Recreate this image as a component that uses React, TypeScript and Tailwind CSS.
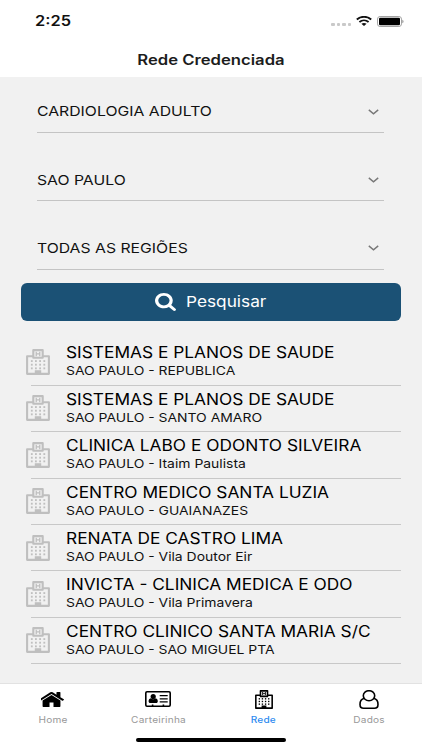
import type { ReactNode } from 'react';

interface Provider {
  name: string;
  place: string;
}

const filters = ['CARDIOLOGIA ADULTO', 'SAO PAULO', 'TODAS AS REGIÕES'];

const providers: Provider[] = [
  { name: 'SISTEMAS E PLANOS DE SAUDE', place: 'SAO PAULO - REPUBLICA' },
  { name: 'SISTEMAS E PLANOS DE SAUDE', place: 'SAO PAULO - SANTO AMARO' },
  { name: 'CLINICA LABO E ODONTO SILVEIRA', place: 'SAO PAULO - Itaim Paulista' },
  { name: 'CENTRO MEDICO SANTA LUZIA', place: 'SAO PAULO - GUAIANAZES' },
  { name: 'RENATA DE CASTRO LIMA', place: 'SAO PAULO - Vila Doutor Eir' },
  { name: 'INVICTA - CLINICA MEDICA E ODO', place: 'SAO PAULO - Vila Primavera' },
  { name: 'CENTRO CLINICO SANTA MARIA S/C', place: 'SAO PAULO - SAO MIGUEL PTA' },
];

function HospitalIcon({ className }: { className: string }) {
  return (
    <svg viewBox="0 0 24 25" preserveAspectRatio="none" className={className} fill="currentColor">
      <path
        d="M7 7H1.1v16.9h21.8V7H17M7.3 1.1h9.4v7.3H7.3z"
        fill="none"
        stroke="currentColor"
        strokeWidth="2.1"
        strokeLinejoin="round"
      />
      <path d="M9.6 2.7h1.3v1.5h2.2V2.7h1.3v4.2h-1.3V5.4h-2.2v1.5H9.6z" />
      {[10.7, 14.2, 17.7].map((y) =>
        [4.9, 9, 13.2, 17.4].map((x) => (
          <rect key={`${x}-${y}`} x={x} y={y} width="1.8" height="1.8" />
        ))
      )}
      <path d="M8.8 20.4h6.4V24H8.8z" />
    </svg>
  );
}

function HomeIcon() {
  return (
    <svg viewBox="154 253 1484 1283" preserveAspectRatio="none" className="h-[15px] w-[23px]" fill="currentColor">
      <path d="M1408 992v480q0 26-19 45t-45 19h-384v-384h-256v384h-384q-26 0-45-19t-19-45v-480q0-1 .5-3t.5-3l575-474 575 474q1 2 1 6zm223-69l-62 74q-8 9-21 11h-3q-13 0-21-7l-692-577-692 577q-12 8-24 7-13-2-21-11l-62-74q-8-10-7-23.5t11-21.5l719-599q32-26 76-26t76 26l244 204v-195q0-14 9-23t23-9h192q14 0 23 9t9 23v408l219 182q10 8 11 21.5t-7 23.5z" />
    </svg>
  );
}

function CardIcon() {
  return (
    <svg viewBox="0 0 26 16" className="h-4 w-[26px]" fill="currentColor">
      <rect x=".8" y=".8" width="24.4" height="14.4" rx="1.2" fill="none" stroke="currentColor" strokeWidth="1.6" />
      <circle cx="8.2" cy="5.6" r="2.6" />
      <path d="M5.7 7.2q2.5 2 5 0c1.4.3 2.1 1.5 2.1 3 0 1.1-.7 1.8-1.6 1.8H5.2c-.9 0-1.6-.7-1.6-1.8 0-1.5.7-2.7 2.1-3z" />
      <path d="M14.7 4h8v1.2h-8zM14.7 7.2h8v1.2h-8zM14.7 10.3h8v1.2h-8zM6.8 13.6h1.6V15H6.8zM17.6 13.6h1.6V15h-1.6z" />
    </svg>
  );
}

function UserIcon() {
  return (
    <svg viewBox="0 0 20 19" className="h-[19px] w-5" fill="none" stroke="currentColor" strokeWidth="1.6">
      <ellipse cx="10" cy="5.7" rx="5.7" ry="5" />
      <path d="M5.3 8.3C2.4 9 1 11.6 1 14.4c0 2.3 1.5 3.8 3.6 3.8h10.8c2.1 0 3.6-1.5 3.6-3.8 0-2.8-1.4-5.4-4.3-6.1" />
    </svg>
  );
}

function SearchIcon() {
  return (
    <svg viewBox="64 128 1664 1664" preserveAspectRatio="none" className="h-[18px] w-[21px]" fill="currentColor">
      <path d="M1216 832q0-185-131.5-316.5t-316.5-131.5-316.5 131.5-131.5 316.5 131.5 316.5 316.5 131.5 316.5-131.5 131.5-316.5zm512 832q0 52-38 90t-90 38q-54 0-90-38l-343-342q-179 124-399 124-143 0-273.5-55.5t-225-150-150-225-55.5-273.5 55.5-273.5 150-225 225-150 273.5-55.5 273.5 55.5 225 150 150 225 55.5 273.5q0 220-124 399l343 343q37 37 37 90z" />
    </svg>
  );
}

function StatusBar() {
  return (
    <div className="flex h-[42px] items-center justify-between pr-[18px] pl-[35px]">
      <span className="origin-left scale-x-[1.17] text-[14px] leading-none font-semibold">2:25</span>
      <div className="flex items-center">
        <div className="mt-[6px] mr-[5px] flex gap-[2px]">
          {[0, 1, 2, 3].map((dot) => (
            <span key={dot} className="h-[3px] w-[3.5px] rounded-[1px] bg-[#c9c9c9]" />
          ))}
        </div>
        <svg viewBox="0 0 16 10" className="mr-[5px] h-[10px] w-4" fill="none" stroke="currentColor" strokeWidth="1.9">
          <path d="M.8 3.5C5-.1 11-.1 15.2 3.5M3.4 6c2.7-2.2 6.5-2.2 9.2 0" />
          <path d="M5.4 7.7c1.6-1.1 3.6-1.1 5.2 0L8 10z" fill="currentColor" stroke="none" />
        </svg>
        <svg viewBox="0 0 27 11" className="h-[11px] w-[27px]">
          <rect x=".5" y=".5" width="24" height="10" rx="2.6" fill="none" stroke="#a3a3a3" />
          <rect x="2" y="1.7" width="21" height="7.6" rx="1.2" />
          <path d="M25.4 3.8c1.5.4 1.5 3 0 3.4z" fill="#8a8a8a" />
        </svg>
      </div>
    </div>
  );
}

interface TabProps {
  label: string;
  active?: boolean;
  children: ReactNode;
}

function Tab({ label, active, children }: TabProps) {
  return (
    <div className="flex flex-1 flex-col items-center">
      <div className="flex h-[30px] items-center justify-center text-black">{children}</div>
      <span
        className={
          active
            ? 'scale-x-[1.12] text-[9px] leading-[11px] font-medium tracking-[0.2px] text-[#2f8cf0]'
            : 'scale-x-[1.12] text-[9px] leading-[11px] tracking-[0.2px] text-[#999999]'
        }
      >
        {label}
      </span>
    </div>
  );
}

export default function App() {
  return (
    <div className="flex h-[750px] w-[422px] flex-col overflow-hidden bg-[#f1f1f1] font-['Inter','Liberation_Sans',sans-serif] text-[#111111]">
      <header className="h-[77px] shrink-0 bg-white">
        <StatusBar />
        <h1 className="flex h-[34px] items-center justify-center text-[14px] font-semibold text-[#1c1c1c]">
          <span className="scale-x-[1.19]">Rede Credenciada</span>
        </h1>
      </header>

      <main className="flex-1">
        <div className="pr-[38px] pl-[37px]">
          {filters.map((filter, index) => (
            <div
              key={filter}
              className={index === 0 ? 'flex h-[55.8px] flex-col justify-end' : 'flex h-[68.4px] flex-col justify-end'}
            >
              <div className="flex h-[55.4px] items-center justify-between border-b border-[#c4c4c4] pt-[14px] pr-[5px]">
                <span className="origin-left scale-x-[1.168] text-[13.5px] whitespace-nowrap">{filter}</span>
                <svg viewBox="0 0 11 6" className="h-[6px] w-[11px]" fill="none" stroke="#777777" strokeWidth="1.4">
                  <path d="M.8.9l4.7 3.9L10.2.9" />
                </svg>
              </div>
            </div>
          ))}
        </div>

        <button className="mt-[13.4px] ml-[21px] flex h-[38px] w-[380px] items-center rounded-[6px] bg-[#1b5175] pl-[134px] text-white">
          <SearchIcon />
          <span className="ml-[10px] origin-left scale-x-[1.15] text-[15px]">Pesquisar</span>
        </button>

        <ul className="mt-[18.4px] pr-[21px] pl-[26px]">
          {providers.map((provider, index) => (
            <li key={index} className="flex h-[46.4px]">
              <HospitalIcon className="mt-[9.6px] -mr-[19px] h-[26px] w-6 shrink-0 text-[#bfbfbf]" />
              <div className="flex flex-1 flex-col border-b border-[#c8c8c8] pt-[4px] pl-[35px] whitespace-nowrap">
                <span className="origin-left scale-x-[1.116] text-[15.5px] leading-5 text-black">{provider.name}</span>
                <span className="origin-left scale-x-[1.16] text-[12px] leading-4">{provider.place}</span>
              </div>
            </li>
          ))}
        </ul>
      </main>

      <nav className="flex h-[67px] shrink-0 flex-col border-t border-[#e2e2e2] bg-white">
        <div className="flex">
          <Tab label="Home">
            <HomeIcon />
          </Tab>
          <Tab label="Carteirinha">
            <CardIcon />
          </Tab>
          <Tab label="Rede" active>
            <HospitalIcon className="h-[19px] w-[18px]" />
          </Tab>
          <Tab label="Dados">
            <UserIcon />
          </Tab>
        </div>
        <div className="mx-auto mt-[13px] h-1 w-[150px] rounded-full bg-black" />
      </nav>
    </div>
  );
}
